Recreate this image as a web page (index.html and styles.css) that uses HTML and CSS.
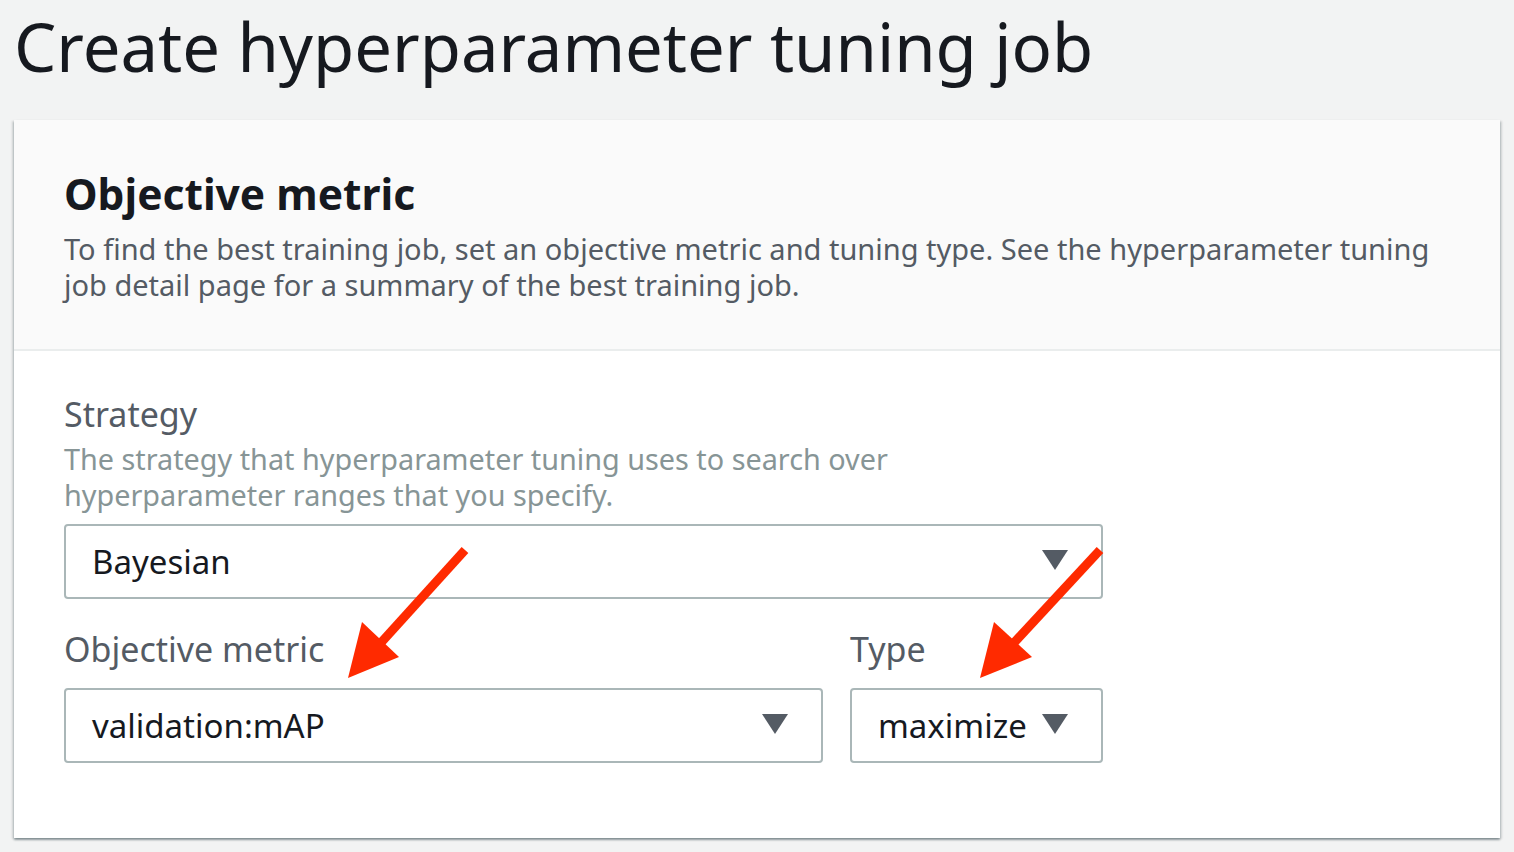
FILE: index.html
```html
<!DOCTYPE html>
<html>
<head>
<meta charset="utf-8">
<link rel="stylesheet" href="styles.css">
</head>
<body>
<h1 class="page-title">Create hyperparameter tuning job</h1>
<div class="card">
  <div class="card-header">
    <h2 class="card-title">Objective metric</h2>
    <p class="card-desc">To find the best training job, set an objective metric and tuning type. See the hyperparameter tuning job detail page for a summary of the best training job.</p>
  </div>
  <div class="card-body">
    <div class="field">
      <div class="label">Strategy</div>
      <div class="hint">The strategy that hyperparameter tuning uses to search over<br>hyperparameter ranges that you specify.</div>
      <div class="select wide"><span class="value">Bayesian</span><span class="caret"></span></div>
    </div>
    <div class="row">
      <div class="field metric">
        <div class="label">Objective metric</div>
        <div class="select"><span class="value">validation:mAP</span><span class="caret"></span></div>
      </div>
      <div class="field type">
        <div class="label">Type</div>
        <div class="select"><span class="value">maximize</span><span class="caret"></span></div>
      </div>
    </div>
  </div>
</div>
<svg class="arrows" width="1514" height="852" viewBox="0 0 1514 852">
  <line x1="465" y1="550" x2="378" y2="646" stroke="#ff2a00" stroke-width="9"/>
  <polygon points="348,678 362,622 399,657" fill="#ff2a00"/>
  <line x1="1100" y1="550" x2="1011" y2="646" stroke="#ff2a00" stroke-width="9"/>
  <polygon points="980,678 994,622 1032,657" fill="#ff2a00"/>
</svg>
</body>
</html>
```
FILE: styles.css
```css
html, body {
  margin: 0;
  padding: 0;
}
body {
  background: #f2f3f3;
  font-family: "Noto Sans", "Open Sans", sans-serif;
  color: #16191f;
  width: 1514px;
  height: 852px;
  overflow: hidden;
  position: relative;
}
.page-title {
  margin: 0;
  padding: 6px 0 0 14px;
  height: 112px;
  box-sizing: border-box;
  font-weight: 400;
  font-size: 67px;
  line-height: 80px;
  color: #16191f;
}
.card {
  margin-left: 14px;
  width: 1486px;
  height: 718px;
  background: #fff;
  box-shadow: 0 2px 2px 0 rgba(0,28,36,.35), 2px 1px 2px 0 rgba(0,28,36,.12), -2px 1px 2px 0 rgba(0,28,36,.12);
  display: flex;
  flex-direction: column;
  margin-top: 8px;
}
.card-header {
  background: #fafafa;
  height: 231px;
  box-sizing: border-box;
  border-bottom: 2px solid #eaeded;
  padding: 46px 50px 0 50px;
}
.card-title {
  margin: 0;
  font-size: 42.5px;
  font-weight: 700;
  line-height: 56px;
  color: #16191f;
}
.card-desc {
  margin: 9px 0 0;
  font-size: 29px;
  line-height: 36px;
  color: #545b64;
}
.card-body {
  padding: 43px 50px 0 50px;
  display: flex;
  flex-direction: column;
}
.label {
  font-size: 34px;
  line-height: 40px;
  color: #545b64;
}
.hint {
  font-size: 28.8px;
  line-height: 36px;
  color: #879596;
  margin-top: 7px;
}
.select {
  box-sizing: border-box;
  height: 75px;
  border: 2px solid #aab7b8;
  border-radius: 4px;
  background: #fff;
  display: flex;
  align-items: center;
  justify-content: space-between;
  padding: 0 33px 0 26px;
}
.select.wide {
  width: 1039px;
  margin-top: 11px;
}
.value {
  font-size: 33px;
  color: #16191f;
}
.caret {
  width: 0;
  height: 0;
  border-left: 13px solid transparent;
  border-right: 13px solid transparent;
  border-top: 20px solid #545b64;
  margin-top: -4px;
}
.row {
  display: flex;
  gap: 27px;
  margin-top: 30px;
}
.row .label {
  margin-bottom: 19px;
}
.metric {
  width: 759px;
}
.type {
  width: 253px;
}
.arrows {
  position: absolute;
  left: 0;
  top: 0;
  pointer-events: none;
}
```
